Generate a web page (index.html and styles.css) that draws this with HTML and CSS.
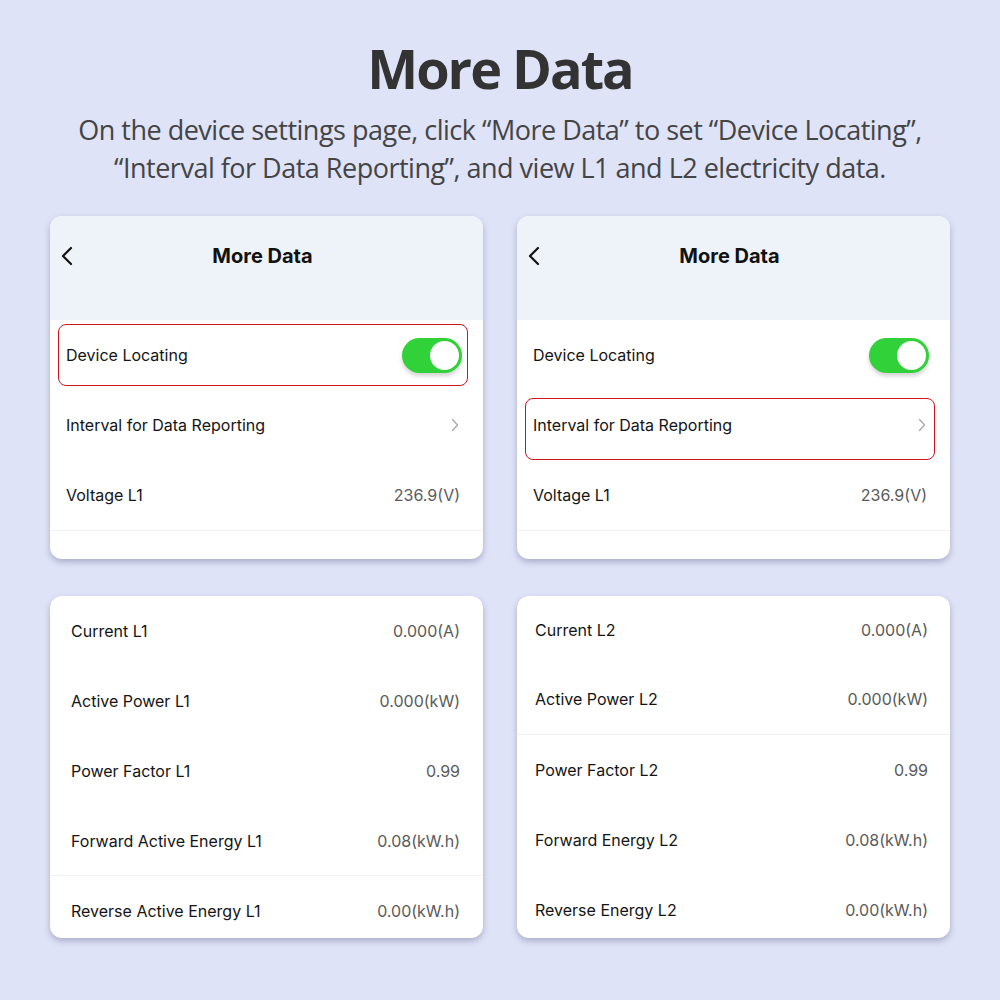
FILE: index.html
```html
<!DOCTYPE html>
<html lang="en">
<head>
<meta charset="utf-8">
<title>More Data</title>
<link rel="stylesheet" href="styles.css">
</head>
<body>
<main class="page">
  <h1 class="title">More Data</h1>
  <p class="subtitle">On the device settings page, click “More Data” to set “Device Locating”,<br>“Interval for Data Reporting”, and view L1 and L2 electricity data.</p>

  <div class="grid">
    <section class="card card-top">
      <header class="nav">
        <div class="navbar">
          <svg class="back" width="14" height="20" viewBox="0 0 14 20"><path d="M11 2 L3 10 L11 18" fill="none" stroke="#111" stroke-width="2.2" stroke-linecap="round" stroke-linejoin="round"/></svg>
          <span class="nav-title">More Data</span>
        </div>
      </header>
      <div class="row hl hl-a"><span class="label">Device Locating</span><span class="toggle"><span class="knob"></span></span></div>
      <div class="row"><span class="label">Interval for Data Reporting</span><svg class="chev" width="8" height="14" viewBox="0 0 8 14"><path d="M1.5 1.5 L6.5 7 L1.5 12.5" fill="none" stroke="#a8a8a8" stroke-width="1.3" stroke-linecap="round" stroke-linejoin="round"/></svg></div>
      <div class="row divided"><span class="label">Voltage L1</span><span class="value">236.9(V)</span></div>
    </section>

    <section class="card card-top">
      <header class="nav">
        <div class="navbar">
          <svg class="back" width="14" height="20" viewBox="0 0 14 20"><path d="M11 2 L3 10 L11 18" fill="none" stroke="#111" stroke-width="2.2" stroke-linecap="round" stroke-linejoin="round"/></svg>
          <span class="nav-title">More Data</span>
        </div>
      </header>
      <div class="row"><span class="label">Device Locating</span><span class="toggle"><span class="knob"></span></span></div>
      <div class="row hl hl-b"><span class="label">Interval for Data Reporting</span><svg class="chev" width="8" height="14" viewBox="0 0 8 14"><path d="M1.5 1.5 L6.5 7 L1.5 12.5" fill="none" stroke="#a8a8a8" stroke-width="1.3" stroke-linecap="round" stroke-linejoin="round"/></svg></div>
      <div class="row divided"><span class="label">Voltage L1</span><span class="value">236.9(V)</span></div>
    </section>

    <section class="card card-bottom card-l1">
      <div class="row"><span class="label">Current L1</span><span class="value">0.000(A)</span></div>
      <div class="row"><span class="label">Active Power L1</span><span class="value">0.000(kW)</span></div>
      <div class="row"><span class="label">Power Factor L1</span><span class="value">0.99</span></div>
      <div class="row divided"><span class="label">Forward Active Energy L1</span><span class="value">0.08(kW.h)</span></div>
      <div class="row"><span class="label">Reverse Active Energy L1</span><span class="value">0.00(kW.h)</span></div>
    </section>

    <section class="card card-bottom card-l2">
      <div class="row"><span class="label">Current L2</span><span class="value">0.000(A)</span></div>
      <div class="row divided"><span class="label">Active Power L2</span><span class="value">0.000(kW)</span></div>
      <div class="row"><span class="label">Power Factor L2</span><span class="value">0.99</span></div>
      <div class="row"><span class="label">Forward Energy L2</span><span class="value">0.08(kW.h)</span></div>
      <div class="row"><span class="label">Reverse Energy L2</span><span class="value">0.00(kW.h)</span></div>
    </section>
  </div>
</main>
</body>
</html>
```
FILE: styles.css
```css
html, body {
  margin: 0;
  padding: 0;
}
body {
  background: #dfe3f8;
  width: 1000px;
  height: 1000px;
  overflow: hidden;
}
.page {
  padding-top: 36px;
  display: flex;
  flex-direction: column;
  align-items: center;
}
.title {
  margin: 0;
  font-family: "Open Sans", sans-serif;
  font-weight: 700;
  font-size: 54px;
  letter-spacing: -2px;
  line-height: 64px;
  color: #333333;
  text-align: center;
}
.subtitle {
  margin: 11px 0 0;
  font-family: "Open Sans", sans-serif;
  font-size: 27px;
  letter-spacing: -0.5px;
  line-height: 38px;
  color: #444444;
  text-align: center;
  white-space: nowrap;
}
.grid {
  margin-top: 29px;
  display: grid;
  grid-template-columns: 433px 433px;
  grid-template-rows: 343px 342px;
  column-gap: 34px;
  row-gap: 37px;
}
.card {
  background: #ffffff;
  border-radius: 12px;
  overflow: hidden;
  box-shadow: 0 3px 6px rgba(70, 72, 110, 0.35);
  font-family: Inter, "Noto Sans", sans-serif;
}
.nav {
  height: 104px;
  background: #eef3f9;
}
.navbar {
  height: 80px;
  position: relative;
  display: flex;
  align-items: center;
  justify-content: center;
  padding-right: 8px;
}
.back {
  position: absolute;
  left: 10px;
  top: 30px;
}
.nav-title {
  font-size: 20px;
  font-weight: 700;
  color: #111111;
}
.row {
  position: relative;
  height: 70px;
  display: flex;
  align-items: center;
  justify-content: space-between;
  padding: 0 23px 0 16px;
  box-sizing: border-box;
}
.card-top .row:first-of-type {
  height: 70px;
}
.card-l1 .row {
  padding: 0 23px 0 21px;
}
.card-l2 .row {
  padding: 0 22px 0 18px;
}
.card-l2 .row:first-child {
  height: 68px;
}
.card-l2 .row.divided {
  height: 71px;
}
.divided {
  border-bottom: 1px solid #f1f2f4;
}
.card-top .row.divided {
  height: 71px;
}
.label {
  font-size: 16px;
  color: #141414;
}
.value {
  font-size: 16px;
  color: #5a5a5a;
}
.chev {
  margin-right: 1px;
}
.toggle {
  width: 60px;
  height: 35px;
  border-radius: 18px;
  background: #31d239;
  display: flex;
  align-items: center;
  justify-content: flex-end;
  padding: 0 3px;
  box-sizing: border-box;
  margin-right: -2px;
  box-shadow: 0 3px 4px rgba(0, 0, 0, 0.18);
}
.knob {
  width: 29px;
  height: 29px;
  border-radius: 50%;
  background: #ffffff;
}
.hl::before {
  content: "";
  position: absolute;
  top: 4px;
  bottom: 4px;
  left: 8px;
  right: 15px;
  border: 1px solid #d0141c;
  border-radius: 8px;
  pointer-events: none;
}
.hl-b::before {
  top: 8px;
  bottom: 0;
}
```
